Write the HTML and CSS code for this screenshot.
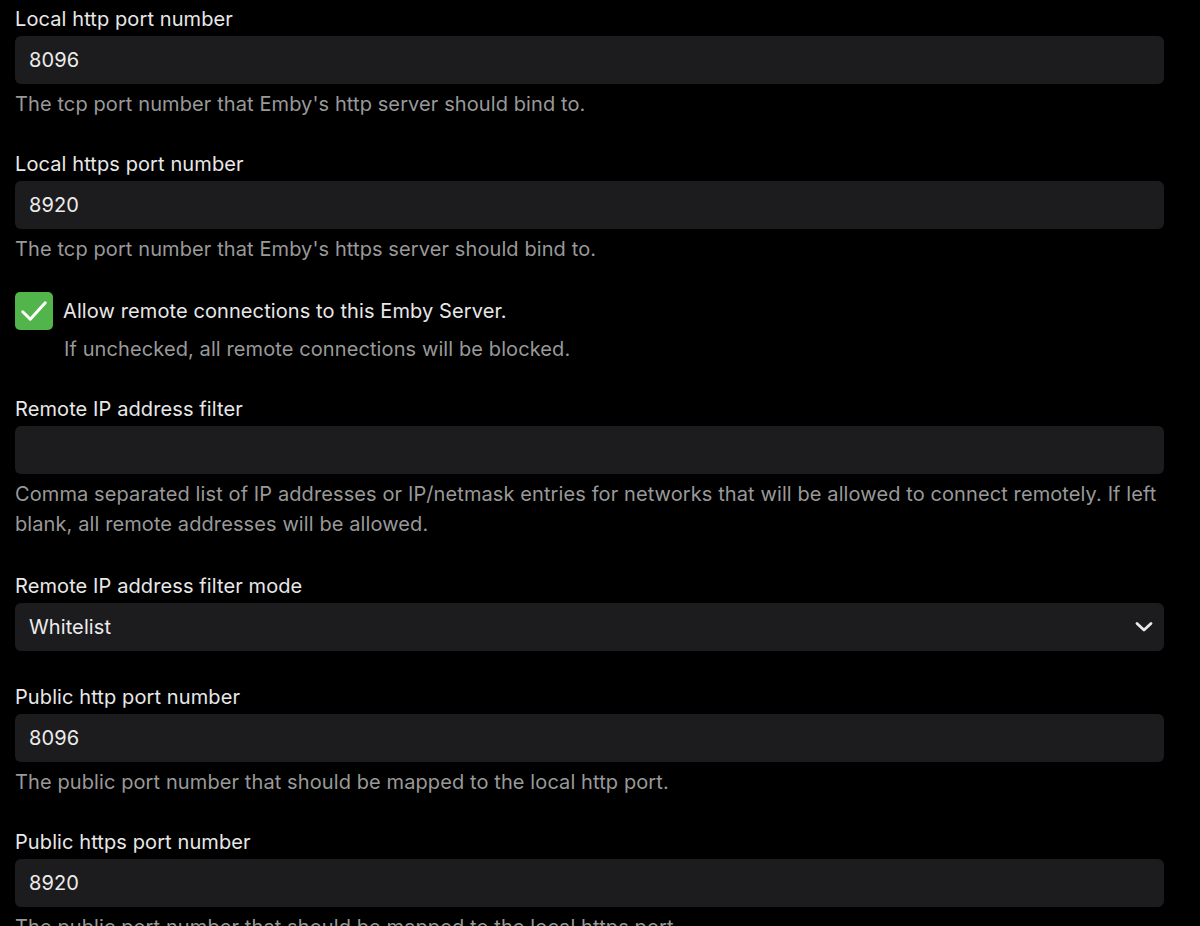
FILE: index.html
```html
<!DOCTYPE html>
<html lang="en">
<head>
<meta charset="utf-8">
<title>Network settings</title>
<link rel="stylesheet" href="styles.css">
</head>
<body>
<main class="form">
  <div class="field">
    <label class="label">Local http port number</label>
    <div class="input">8096</div>
    <div class="desc">The tcp port number that Emby's http server should bind to.</div>
  </div>
  <div class="field">
    <label class="label">Local https port number</label>
    <div class="input">8920</div>
    <div class="desc">The tcp port number that Emby's https server should bind to.</div>
  </div>
  <div class="field check-field">
    <div class="check-row">
      <span class="checkbox">
        <svg width="36" height="36" viewBox="0 0 24 24"><path d="M4.5 12.5 L9.5 17.5 L19.5 6.5" fill="none" stroke="#fff" stroke-width="2" stroke-linecap="round" stroke-linejoin="round"/></svg>
      </span>
      <span class="check-label">Allow remote connections to this Emby Server.</span>
    </div>
    <div class="desc check-desc">If unchecked, all remote connections will be blocked.</div>
  </div>
  <div class="field">
    <label class="label">Remote IP address filter</label>
    <div class="input"></div>
    <div class="desc">Comma separated list of IP addresses or IP/netmask entries for networks that will be allowed to connect remotely. If left blank, all remote addresses will be allowed.</div>
  </div>
  <div class="field select-field">
    <label class="label">Remote IP address filter mode</label>
    <div class="input select">
      <span>Whitelist</span>
      <svg class="chev" width="18" height="12" viewBox="0 0 18 12"><path d="M2 2.5 L9 9 L16 2.5" fill="none" stroke="#e8e8e8" stroke-width="2.8" stroke-linecap="round" stroke-linejoin="round"/></svg>
    </div>
  </div>
  <div class="field after-select">
    <label class="label">Public http port number</label>
    <div class="input">8096</div>
    <div class="desc">The public port number that should be mapped to the local http port.</div>
  </div>
  <div class="field">
    <label class="label">Public https port number</label>
    <div class="input">8920</div>
    <div class="desc">The public port number that should be mapped to the local https port.</div>
  </div>
</main>
</body>
</html>
```
FILE: styles.css
```css
html, body {
  margin: 0;
  padding: 0;
  background: #000;
}
body {
  font-family: Inter, "Noto Sans", "Liberation Sans", sans-serif;
  color: #e6e6e6;
  overflow: hidden;
  height: 926px;
  letter-spacing: 0.1px;
}
.form {
  width: 1149px;
  padding: 6px 0 0 15px;
  display: flex;
  flex-direction: column;
  gap: 32px;
}
.field {
  display: flex;
  flex-direction: column;
}
.label {
  font-size: 20px;
  line-height: 26px;
  color: #e8e8e8;
  margin-bottom: 4px;
}
.input {
  height: 48px;
  box-sizing: border-box;
  background: #1c1c1e;
  border-radius: 6px;
  padding: 0 14px;
  display: flex;
  align-items: center;
  font-size: 20px;
  color: #ececec;
}
.select {
  justify-content: space-between;
  padding-right: 11px;
}
.desc {
  margin-top: 5px;
  font-size: 20px;
  line-height: 30px;
  color: #999999;
}
.check-field {
  margin-top: -4px;
}
.check-row {
  display: flex;
  align-items: center;
  gap: 10px;
}
.checkbox {
  width: 38px;
  height: 38px;
  border-radius: 5px;
  background: #52b54b;
  display: flex;
  align-items: center;
  justify-content: center;
}
.check-label {
  font-size: 20px;
  line-height: 26px;
  color: #e8e8e8;
}
.check-desc {
  margin-top: 4px;
  padding-left: 49px;
}
.select-field {
  margin-top: 2px;
}
.after-select {
  margin-top: 1px;
}
```
